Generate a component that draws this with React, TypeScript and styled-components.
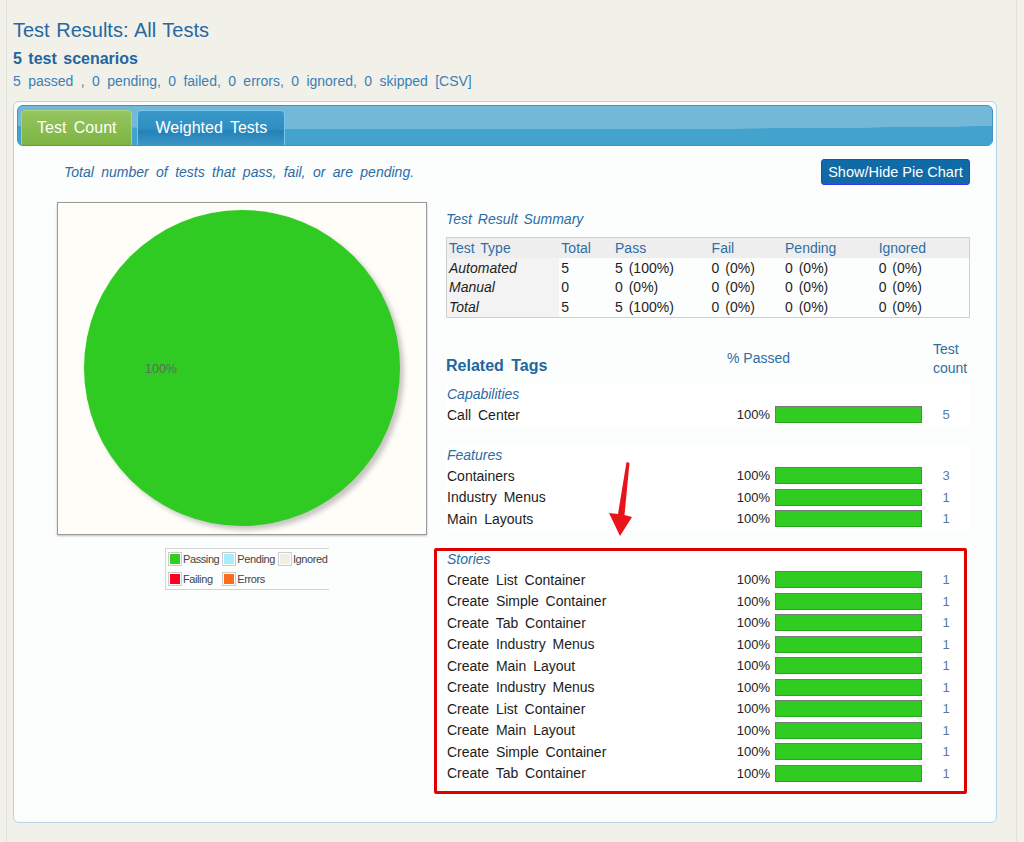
import styled, { createGlobalStyle } from "styled-components";

const GlobalStyle = createGlobalStyle`
  body {
    margin: 0;
    background: #f1f1e9;
    font-family: "Liberation Sans", Arial, sans-serif;
  }
`

const Page = styled.div`
  width: 1011px;
  min-height: 842px;
  margin-left: 6px;
  padding-left: 6px;
  box-sizing: border-box;
  border-left: 1px solid #e2e2da;
  border-right: 1px solid #e2e2da;
`

const Header = styled.header`
  padding-top: 18px;
`

const Title = styled.h1`
  margin: 0;
  font-size: 20px;
  line-height: 24px;
  font-weight: normal;
  color: #2768a0;
  word-spacing: 1px;
`

const Scenarios = styled.h2`
  margin: 7px 0 0;
  font-size: 16px;
  line-height: 20px;
  font-weight: bold;
  color: #22669e;
  word-spacing: 2px;
`

const Stats = styled.div`
  margin-top: 3px;
  font-size: 14px;
  line-height: 18px;
  color: #3a7fb6;
  word-spacing: 3.5px;
`

const Panel = styled.div`
  width: 984px;
  margin-top: 11px;
  padding: 3px 3px 38px;
  box-sizing: border-box;
  background: #fcfdfd;
  border: 1px solid #b3d4e8;
  border-radius: 6px;
`

const TabBar = styled.div`
  height: 41px;
  box-sizing: border-box;
  display: flex;
  align-items: flex-end;
  gap: 5px;
  padding-left: 3px;
  border: 1px solid #4590c6;
  border-radius: 6px;
  background: radial-gradient(ellipse 100% 60% at 50% 0, #74b8d8 99%, transparent 100%), #44a3cc;
  overflow: hidden;
`

const Tab = styled.div<{ $active?: boolean }>`
  height: 36px;
  margin-bottom: -1px;
  box-sizing: border-box;
  padding: 0 ${p => (p.$active ? 15 : 17)}px;
  display: flex;
  align-items: center;
  border-radius: 4px 4px 0 0;
  border: 1px solid ${p => (p.$active ? "#a8d577" : "#79c6ee")};
  background: ${p =>
    p.$active
      ? "linear-gradient(#95c55f, #7db443)"
      : "linear-gradient(#3a98c9 0%, #3090c3 50%, #2482b8 60%, #3c95c4 100%)"};
  color: #fff;
  font-size: 16px;
  word-spacing: 3px;
`

const Content = styled.div`
  padding: 13px 23px 0 0;
`

const IntroRow = styled.div`
  height: 25px;
  display: flex;
  align-items: center;
  justify-content: space-between;
`

const Intro = styled.p`
  margin: 0 0 0 47px;
  font-size: 14px;
  font-style: italic;
  color: #2b6ca5;
  word-spacing: 3.5px;
`

const ChartButton = styled.button`
  width: 149px;
  height: 26px;
  padding: 0;
  background: #0f6aa6;
  border: 1px solid #3636f2;
  border-radius: 3px;
  color: #fff;
  font-family: "Liberation Sans", Arial, sans-serif;
  font-size: 14.5px;
`

const MainRow = styled.div`
  display: flex;
  gap: 19px;
  margin-top: 18px;
  padding-left: 40px;
`

const LeftCol = styled.div`
  width: 370px;
`

const PieBox = styled.div`
  width: 370px;
  height: 333px;
  box-sizing: border-box;
  background: #fffdf7;
  border: 1px solid #9a9a9a;
  box-shadow: 0 1px 2px rgba(0, 0, 0, 0.25);
`

const Legend = styled.div`
  display: grid;
  grid-template-columns: 14px auto 14px auto 14px auto;
  grid-auto-rows: 20px;
  align-items: center;
  column-gap: 1px;
  width: max-content;
  margin: 13px 0 0 108px;
  padding-left: 2px;
  border-top: 1px solid #d4d4d4;
  border-left: 1px solid #d4d4d4;
  border-bottom: 1px solid #d4d4d4;
  font-size: 11px;
  letter-spacing: -0.4px;
  color: #444;
`

const Swatch = styled.span<{ $color: string }>`
  width: 10px;
  height: 10px;
  padding: 1px;
  border: 1px solid #ccc;
  background: ${p => p.$color};
  background-clip: content-box;
`

const LegendLabel = styled.span`
  padding-right: 2px;
`

const RightCol = styled.div`
  position: relative;
  width: 524px;
`

const Caption = styled.div`
  margin-top: 8px;
  line-height: 18px;
  font-size: 14px;
  font-style: italic;
  color: #2b6ca5;
  word-spacing: 2px;
`

const Summary = styled.table`
  width: 524px;
  margin-top: 9px;
  border: 1px solid #cfcfcf;
  border-collapse: collapse;
  font-size: 14px;
  word-spacing: 2px;
`

const Th = styled.th<{ $w: number }>`
  width: ${p => p.$w}px;
  height: 20px;
  padding: 0 2px;
  background: #eeeeee;
  font-weight: normal;
  text-align: left;
  color: #2e6ea3;
`

const Td = styled.td`
  height: 19.5px;
  padding: 0 2px;
  color: #1e1e1e;
  &:first-child {
    font-style: italic;
    background: #f3f3f3;
  }
`

const TagHead = styled.div`
  display: grid;
  grid-template-columns: 269px 207px 48px;
  height: 38px;
  margin-top: 22px;
  align-items: center;
`

const TagTitle = styled.div`
  align-self: end;
  margin-bottom: 3px;
  font-size: 16px;
  line-height: 19px;
  font-weight: bold;
  color: #22669e;
  word-spacing: 3px;
`

const HeadCell = styled.div`
  padding-left: 12px;
  font-size: 14px;
  line-height: 19px;
  color: #2e6ea3;
`

const CountHead = styled(HeadCell)`
  padding-left: 11px;
`

const Groups = styled.div`
  display: flex;
  flex-direction: column;
  gap: 19px;
  margin-top: 6px;
`

const Group = styled.div`
  position: relative;
  background: #fff;
`

const GroupLabel = styled.div`
  height: 20.5px;
  line-height: 20.5px;
  padding-left: 1px;
  font-size: 14px;
  font-style: italic;
  color: #2b6ca5;
`

const TagRow = styled.div`
  display: grid;
  grid-template-columns: 269px 60px 147px 48px;
  height: 21.5px;
  align-items: center;
`

const TagName = styled.span`
  padding-left: 1px;
  font-size: 14px;
  word-spacing: 3px;
  color: #1c1c1c;
`

const Pct = styled.span`
  padding-right: 5px;
  text-align: right;
  font-size: 13px;
  color: #222;
`

const Bar = styled.div`
  height: 17px;
  box-sizing: border-box;
  border: 1px solid;
  border-color: #777 #22a818 #22a818 #777;
  background: #fff;
`

const Fill = styled.div`
  height: 100%;
  background: #31cc22;
`

const Count = styled.span`
  text-align: center;
  font-size: 13px;
  color: #5b7a9a;
`

const Highlight = styled.div`
  position: absolute;
  top: -1px;
  left: -12px;
  right: 3px;
  bottom: -10px;
  border: 3px solid #e00000;
  border-radius: 2px;
  pointer-events: none;
`

const Arrow = styled.svg`
  position: absolute;
  left: 157px;
  top: 256px;
`

type Tag = { name: string; pct: number; count: number }

const groups: { label: string; tags: Tag[]; marked?: boolean }[] = [
    { label: "Capabilities", tags: [{ name: "Call Center", pct: 100, count: 5 }] },
    {
        label: "Features",
        tags: [
            { name: "Containers", pct: 100, count: 3 },
            { name: "Industry Menus", pct: 100, count: 1 },
            { name: "Main Layouts", pct: 100, count: 1 },
        ],
    },
    {
        label: "Stories",
        marked: true,
        tags: [
            "Create List Container",
            "Create Simple Container",
            "Create Tab Container",
            "Create Industry Menus",
            "Create Main Layout",
            "Create Industry Menus",
            "Create List Container",
            "Create Main Layout",
            "Create Simple Container",
            "Create Tab Container",
        ].map(name => ({ name, pct: 100, count: 1 })),
    },
]

const summaryRows = [
    ["Automated", "5", "5 (100%)", "0 (0%)", "0 (0%)", "0 (0%)"],
    ["Manual", "0", "0 (0%)", "0 (0%)", "0 (0%)", "0 (0%)"],
    ["Total", "5", "5 (100%)", "0 (0%)", "0 (0%)", "0 (0%)"],
]

const summaryHead: [string, number][] = [
    ["Test Type", 113],
    ["Total", 52],
    ["Pass", 98],
    ["Fail", 74],
    ["Pending", 94],
    ["Ignored", 93],
]

const legend: [string, string][] = [
    ["Passing", "#33cc22"],
    ["Pending", "#a6eef8"],
    ["Ignored", "#eeeee2"],
    ["Failing", "#ff0022"],
    ["Errors", "#ff6a1e"],
]

const PieChart = () => (
    <svg width="368" height="331">
        <defs>
            <filter id="pieShadow" x="-10%" y="-10%" width="120%" height="120%">
                <feGaussianBlur stdDeviation="2.5"/>
            </filter>
        </defs>
        <circle cx="188" cy="169" r="158" fill="#9a9a9a" opacity="0.55" filter="url(#pieShadow)"/>
        <circle cx="184" cy="165" r="158" fill="#2fcb22"/>
        <text x="87" y="170" fontFamily="Liberation Sans, Arial, sans-serif" fontSize="12.5" fill="#5e6a5c">100%</text>
    </svg>
)

export default function App() {
    return (
        <>
            <GlobalStyle/>
            <Page>
                <Header>
                    <Title>Test Results: All Tests</Title>
                    <Scenarios>5 test scenarios</Scenarios>
                    <Stats>5 passed , 0 pending, 0 failed, 0 errors, 0 ignored, 0 skipped [CSV]</Stats>
                </Header>
                <Panel>
                    <TabBar>
                        <Tab $active>Test Count</Tab>
                        <Tab>Weighted Tests</Tab>
                    </TabBar>
                    <Content>
                        <IntroRow>
                            <Intro>Total number of tests that pass, fail, or are pending.</Intro>
                            <ChartButton>Show/Hide Pie Chart</ChartButton>
                        </IntroRow>
                        <MainRow>
                            <LeftCol>
                                <PieBox><PieChart/></PieBox>
                                <Legend>
                                    {legend.map(([label, color]) => (
                                        <>
                                            <Swatch key={label + "s"} $color={color}/>
                                            <LegendLabel key={label}>{label}</LegendLabel>
                                        </>
                                    ))}
                                </Legend>
                            </LeftCol>
                            <RightCol>
                                <Caption>Test Result Summary</Caption>
                                <Summary>
                                    <thead>
                                    <tr>
                                        {summaryHead.map(([h, w]) => <Th key={h} $w={w}>{h}</Th>)}
                                    </tr>
                                    </thead>
                                    <tbody>
                                    {summaryRows.map(row => (
                                        <tr key={row[0]}>
                                            {row.map((c, i) => <Td key={i}>{c}</Td>)}
                                        </tr>
                                    ))}
                                    </tbody>
                                </Summary>

                                <TagHead>
                                    <TagTitle>Related Tags</TagTitle>
                                    <HeadCell>% Passed</HeadCell>
                                    <CountHead>Test<br/>count</CountHead>
                                </TagHead>

                                <Groups>
                                    {groups.map(g => (
                                        <Group key={g.label}>
                                            <GroupLabel>{g.label}</GroupLabel>
                                            {g.tags.map((t, i) => (
                                                <TagRow key={i}>
                                                    <TagName>{t.name}</TagName>
                                                    <Pct>{t.pct}%</Pct>
                                                    <Bar><Fill style={{width: `${t.pct}%`}}/></Bar>
                                                    <Count>{t.count}</Count>
                                                </TagRow>
                                            ))}
                                            {g.marked && <Highlight/>}
                                        </Group>
                                    ))}
                                </Groups>

                                {/* red annotation arrow pointing at the stories block */}
                                <Arrow width="32" height="80" viewBox="0 0 32 80">
                                    <polygon points="23.5,4 26.5,5 21.5,57 29,59 17,78 6,55 15,56" fill="#e8141a"/>
                                </Arrow>
                            </RightCol>
                        </MainRow>
                    </Content>
                </Panel>
            </Page>
        </>
    )
}
